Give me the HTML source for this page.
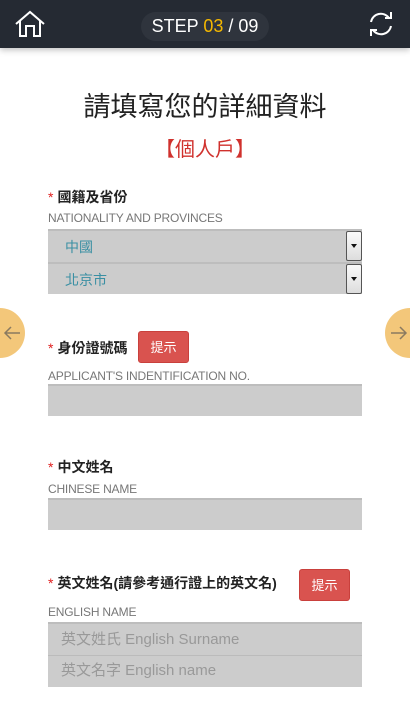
<!DOCTYPE html>
<html><head><meta charset="utf-8"><style>
*{margin:0;padding:0;box-sizing:border-box}
body{width:410px;height:728px;background:#fff;position:relative;overflow:hidden;font-family:"Liberation Sans","Noto Sans CJK TC",sans-serif}
.a{position:absolute}
.hdr{left:0;top:0;width:410px;height:48px;background:#252a33;box-shadow:0 2px 6px rgba(0,0,0,.25)}
.step{left:141px;top:12px;width:128px;height:29px;border-radius:15px;background:#2f343d;color:#fff;font-size:18px;text-align:center;line-height:29px}
.lbl{left:48px;font-size:14px;font-weight:bold;color:#222}
.lbl b{color:#e02020;font-weight:normal;margin-right:4px}
.en{left:48px;font-size:12px;color:#777;letter-spacing:-0.2px}
.box{left:48px;width:314px;background:#ccc;border-top:2px solid #bdbdbd}
.sel{color:#3a8fa3;font-size:14px;padding-left:17px}
.dd{right:0;top:0;width:16px;height:30px;background:linear-gradient(#fafafa,#ddd);border:1px solid #555;border-radius:2px}
.dd:after{content:"";position:absolute;left:4px;top:12px;border-left:3px solid transparent;border-right:3px solid transparent;border-top:4px solid #111}
.btn{background:#d9534f;color:#fff;font-size:13px;border-radius:3px;text-align:center;line-height:32px;width:51px;height:32px;border:1px solid #c9403c}
.ph{color:#999;font-size:15px;padding-left:13px}
.circ{width:50px;height:50px;border-radius:25px;background:#f3c77a}
</style></head><body>
<div class="a hdr"></div>
<svg class="a" style="left:14px;top:10px" width="32" height="28" viewBox="0 0 32 28"><path d="M2 14 L16 2 L30 14 M6 11 V26 H12 V16 H20 V26 H26 V11" fill="none" stroke="#fff" stroke-width="2"/></svg>
<div class="a step">STEP <span style="color:#f5b800">03</span> / 09</div>
<svg class="a" style="left:366px;top:10px" width="30" height="28" viewBox="0 0 30 28"><path d="M5 12 A10 10 0 0 1 23 8 M25 16 A10 10 0 0 1 7 20" fill="none" stroke="#fff" stroke-width="2"/><path d="M19 8 H25 V2 M11 20 H5 V26" fill="none" stroke="#fff" stroke-width="2"/></svg>

<div class="a" style="left:0;top:85px;width:410px;text-align:center;font-size:27px;color:#222">請填寫您的詳細資料</div>
<div class="a" style="left:0;top:133px;width:410px;text-align:center;font-size:20px;color:#d0312d">【個人戶】</div>

<div class="a lbl" style="top:187px"><b>*</b>國籍及省份</div>
<div class="a en" style="top:211px">NATIONALITY AND PROVINCES</div>
<div class="a box sel" style="top:229px;height:33px;line-height:33px">中國<div class="a dd"></div></div>
<div class="a box sel" style="top:262px;height:32px;line-height:32px">北京市<div class="a dd"></div></div>

<div class="a circ" style="left:-25px;top:308px"></div>
<svg class="a" style="left:2px;top:324px" width="20" height="18" viewBox="0 0 20 18"><path d="M18 9 H3 M9 3 L3 9 L9 15" fill="none" stroke="#8a7a60" stroke-width="1.5"/></svg>
<div class="a circ" style="left:385px;top:308px"></div>
<svg class="a" style="left:389px;top:324px" width="20" height="18" viewBox="0 0 20 18"><path d="M2 9 H17 M11 3 L17 9 L11 15" fill="none" stroke="#8a7a60" stroke-width="1.5"/></svg>

<div class="a lbl" style="top:338px"><b>*</b>身份證號碼</div>
<div class="a btn" style="left:138px;top:331px">提示</div>
<div class="a en" style="top:369px">APPLICANT'S INDENTIFICATION NO.</div>
<div class="a box" style="top:384px;height:32px"></div>

<div class="a lbl" style="top:457px"><b>*</b>中文姓名</div>
<div class="a en" style="top:482px">CHINESE NAME</div>
<div class="a box" style="top:498px;height:32px"></div>

<div class="a lbl" style="top:573px"><b>*</b>英文姓名(請參考通行證上的英文名)</div>
<div class="a btn" style="left:299px;top:569px">提示</div>
<div class="a en" style="top:605px">ENGLISH NAME</div>
<div class="a box ph" style="top:622px;height:34px;line-height:32px">英文姓氏 English Surname</div>
<div class="a box ph" style="top:655px;height:32px;line-height:30px;border-top:1px solid #bbb">英文名字 English name</div>
</body></html>
